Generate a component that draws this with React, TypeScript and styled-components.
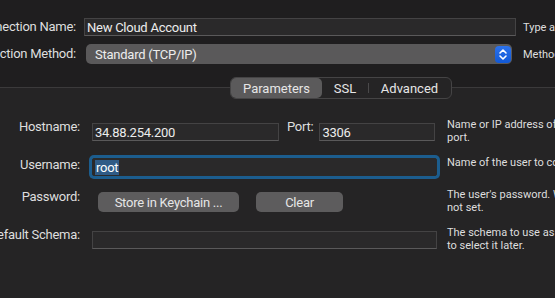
import React from "react";
import styled, { createGlobalStyle } from "styled-components";

const GlobalStyle = createGlobalStyle`
  html, body {
    margin: 0;
    padding: 0;
    background: #1f1e1f;
  }
  body {
    font-family: "Roboto", "Liberation Sans", sans-serif;
    -webkit-font-smoothing: antialiased;
  }
`;

const Page = styled.div`
  width: 555px;
  height: 298px;
  overflow: hidden;
  display: flex;
  flex-direction: column;
  color: #dedede;
  font-size: 13px;
  letter-spacing: -0.25px;
`;

const Header = styled.div`
  background: #1f1e1f;
  padding: 18px 0 13px;
  display: flex;
  flex-direction: column;
  gap: 8px;
`;

const TopRow = styled.div<{ $h: number }>`
  display: flex;
  align-items: center;
  height: ${(p) => p.$h}px;
  white-space: nowrap;
`;

const LabelBox = styled.div<{ $w: number; $top?: number }>`
  width: ${(p) => p.$w}px;
  flex-shrink: 0;
  display: flex;
  justify-content: flex-end;
  white-space: nowrap;
  line-height: 16px;
  margin-top: ${(p) => p.$top ?? 0}px;
`;

const Field = styled.div<{ $w: number; $ml: number; $focus?: boolean }>`
  box-sizing: border-box;
  width: ${(p) => p.$w}px;
  height: 18px;
  margin-left: ${(p) => p.$ml}px;
  flex-shrink: 0;
  background: #2a292a;
  border: 1px solid #444344;
  border-bottom-color: #5a595a;
  color: #ececec;
  font-size: 13px;
  line-height: 17px;
  padding-left: 2px;
  overflow: hidden;
  white-space: nowrap;
  ${(p) =>
    p.$focus &&
    `
    border-color: #2a2a2a;
    border-radius: 2px;
    box-shadow: 0 0 0 3px #1c5d8e;
  `}
`;

const Selected = styled.span`
  background: #2f5b86;
  color: #fff;
  padding: 0 1px;
`;

const Select = styled.div`
  box-sizing: border-box;
  width: 426px;
  height: 20px;
  margin-left: 10px;
  flex-shrink: 0;
  background: #5a595a;
  border-radius: 5px;
  display: flex;
  align-items: center;
  justify-content: space-between;
  padding: 0 1px 0 9px;
  color: #ededed;
`;

const Stepper = styled.span`
  width: 16px;
  height: 17px;
  border-radius: 4px;
  background: linear-gradient(#2c72ec, #1159d6);
  display: flex;
  align-items: center;
  justify-content: center;
`;

const Help = styled.div<{ $ml: number; $top?: number }>`
  margin-left: ${(p) => p.$ml}px;
  margin-top: ${(p) => p.$top ?? 0}px;
  font-size: 11px;
  line-height: 13px;
  color: #dedede;
  white-space: nowrap;
  letter-spacing: 0;
`;

const Strip = styled.div`
  height: 22px;
  flex-shrink: 0;
  background: linear-gradient(
    to bottom,
    #1f1e1f 0,
    #1f1e1f 10px,
    #3b3a3b 10px,
    #3b3a3b 11px,
    #252425 11px
  );
`;

const Segmented = styled.div`
  box-sizing: border-box;
  margin-left: 230px;
  width: 222px;
  height: 22px;
  border: 1px solid #454445;
  border-radius: 6px;
  background: #252425;
  display: flex;
  align-items: center;
`;

const Segment = styled.div<{ $w: number; $active?: boolean; $divider?: boolean }>`
  box-sizing: border-box;
  width: ${(p) => p.$w}px;
  height: 20px;
  display: flex;
  align-items: center;
  justify-content: center;
  border-radius: 5px;
  color: #e6e6e6;
  letter-spacing: 0;
  background: ${(p) => (p.$active ? "#5b5a5b" : "transparent")};
  position: relative;
  ${(p) =>
    p.$divider &&
    `
    &::before {
      content: "";
      position: absolute;
      left: 0;
      top: 5px;
      height: 10px;
      width: 1px;
      background: #4a494a;
    }
  `}
`;

const Body = styled.div`
  flex: 1;
  background: #252425;
  padding-top: 24px;
  display: flex;
  flex-direction: column;
`;

const Row = styled.div<{ $h: number; $mt: number }>`
  display: flex;
  align-items: flex-start;
  height: ${(p) => p.$h}px;
  margin-top: ${(p) => p.$mt}px;
`;

const FieldCol = styled.div`
  width: 345px;
  margin-left: 12px;
  flex-shrink: 0;
  display: flex;
  align-items: flex-start;
`;

const InlineLabel = styled.span`
  margin-left: 8px;
  margin-top: -4px;
  line-height: 16px;
`;

const Button = styled.div<{ $w: number; $ml: number }>`
  box-sizing: border-box;
  width: ${(p) => p.$w}px;
  height: 20px;
  margin-left: ${(p) => p.$ml}px;
  flex-shrink: 0;
  background: #5d5c5d;
  border-radius: 5px;
  display: flex;
  align-items: center;
  justify-content: center;
  color: #e6e6e6;
  white-space: nowrap;
`;

export default function App() {
  return (
    <Page>
      <GlobalStyle />
      <Header>
        <TopRow $h={18}>
          <LabelBox $w={76}>Connection Name:</LabelBox>
          <Field $w={432} $ml={8}>New Cloud Account</Field>
          <Help $ml={7}>Type a name for the connection</Help>
        </TopRow>
        <TopRow $h={20}>
          <LabelBox $w={76}>Connection Method:</LabelBox>
          <Select>
            <span>Standard (TCP/IP)</span>
            <Stepper>
              <svg width="10" height="13" viewBox="0 0 10 13" fill="none">
                <path
                  d="M2 5 L5 2 L8 5 M2 8 L5 11 L8 8"
                  stroke="#fff"
                  strokeWidth="1.6"
                  strokeLinecap="round"
                  strokeLinejoin="round"
                />
              </svg>
            </Stepper>
          </Select>
          <Help $ml={11}>Method to use to connect to the RDBMS</Help>
        </TopRow>
      </Header>

      <Strip>
        <Segmented>
          <Segment $w={91} $active>Parameters</Segment>
          <Segment $w={46}>SSL</Segment>
          <Segment $w={83} $divider>Advanced</Segment>
        </Segmented>
      </Strip>

      <Body>
        <Row $h={18} $mt={0}>
          <LabelBox $w={80} $top={-4}>Hostname:</LabelBox>
          <FieldCol>
            <Field $w={187} $ml={0}>34.88.254.200</Field>
            <InlineLabel>Port:</InlineLabel>
            <Field $w={116} $ml={6}>3306</Field>
          </FieldCol>
          <Help $ml={10} $top={-5}>
            Name or IP address of the server host - and
            <br />
            port.
          </Help>
        </Row>
        <Row $h={18} $mt={17}>
          <LabelBox $w={80} $top={-1}>Username:</LabelBox>
          <FieldCol>
            <Field $w={345} $ml={0} $focus>
              <Selected>root</Selected>
            </Field>
          </FieldCol>
          <Help $ml={10} $top={-2}>Name of the user to connect with.</Help>
        </Row>
        <Row $h={20} $mt={16}>
          <LabelBox $w={80} $top={-3}>Password:</LabelBox>
          <FieldCol>
            <Button $w={141} $ml={6}>Store in Keychain ...</Button>
            <Button $w={87} $ml={17}>Clear</Button>
          </FieldCol>
          <Help $ml={10} $top={-4}>
            The user's password. Will be requested later if it's
            <br />
            not set.
          </Help>
        </Row>
        <Row $h={18} $mt={19}>
          <LabelBox $w={80} $top={-4}>Default Schema:</LabelBox>
          <FieldCol>
            <Field $w={345} $ml={0} />
          </FieldCol>
          <Help $ml={10} $top={-5}>
            The schema to use as default schema. Leave blank
            <br />
            to select it later.
          </Help>
        </Row>
      </Body>
    </Page>
  );
}
